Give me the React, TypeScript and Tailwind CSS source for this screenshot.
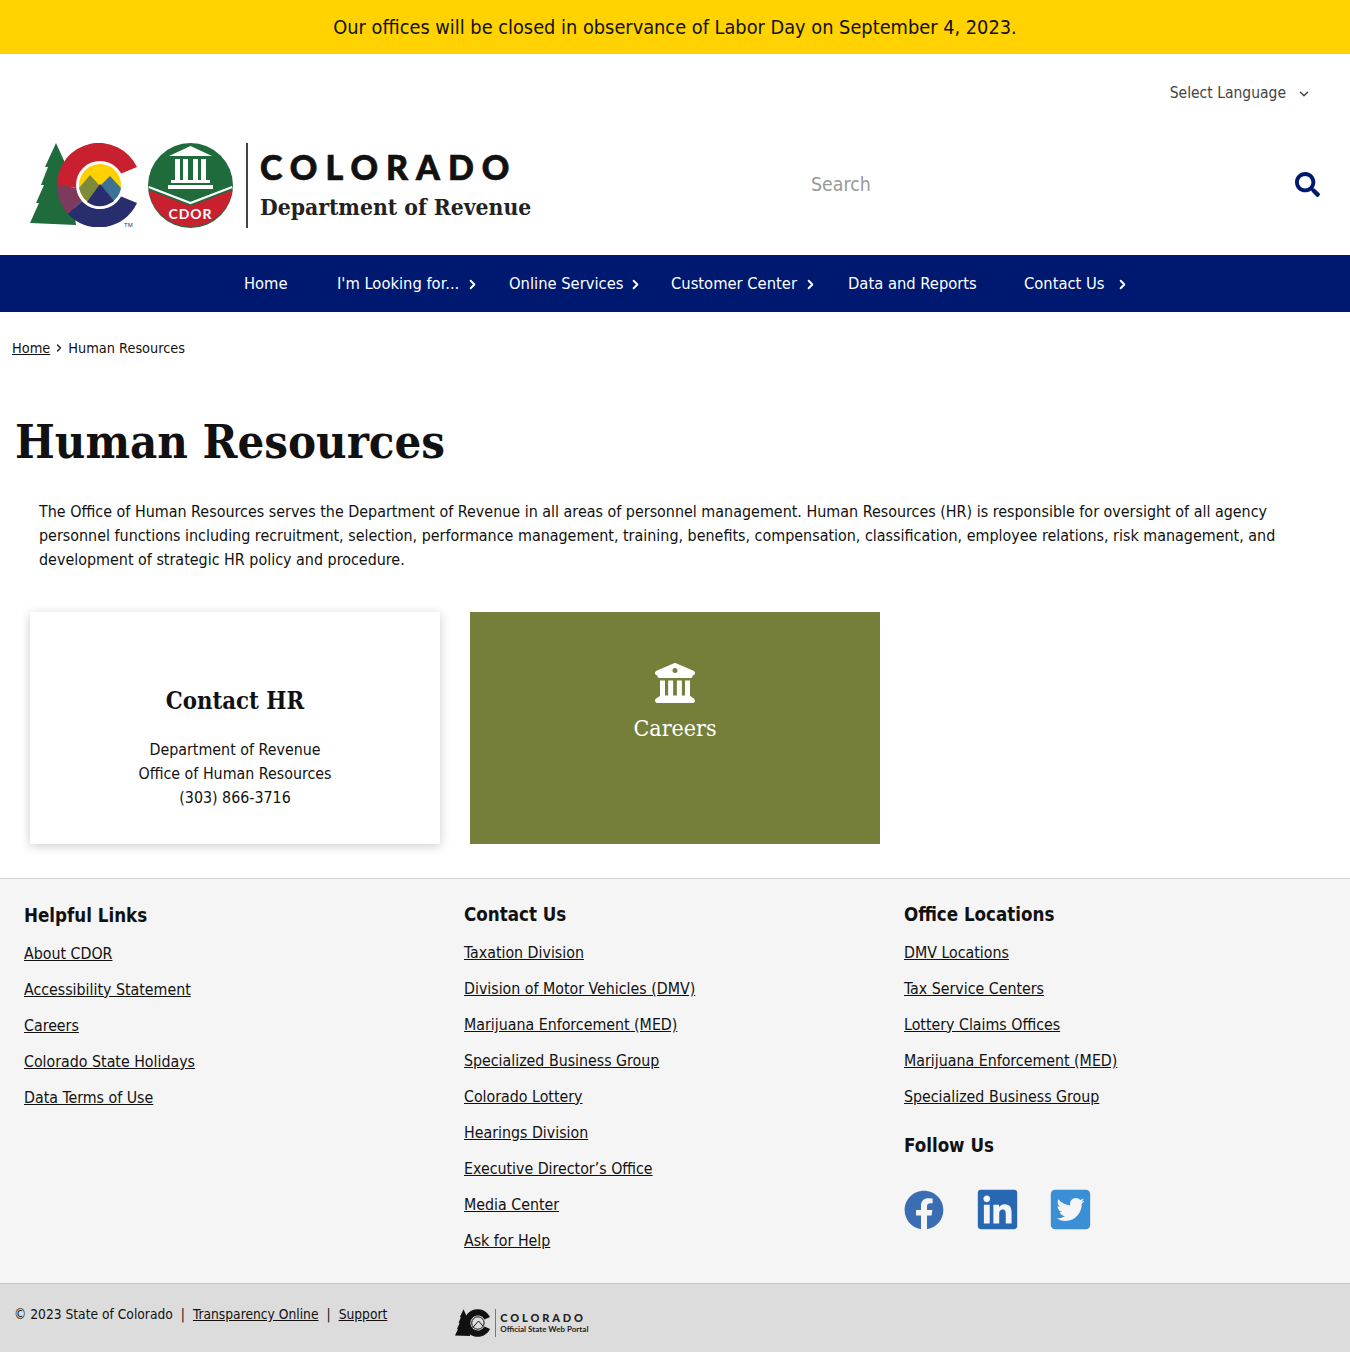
import { ChevronDown, ChevronRight } from "lucide-react";
import { FaFacebook, FaLinkedin, FaSearch, FaTwitterSquare } from "react-icons/fa";
import { FaBuildingColumns } from "react-icons/fa6";

const body = "font-['DejaVu_Sans_Condensed','DejaVu_Sans',sans-serif]";
const serif = "font-['DejaVu_Serif_Condensed','DejaVu_Serif',serif]";

const navItems = [
  { label: "Home", arrow: "", width: "w-[93px]" },
  { label: "I'm Looking for...", arrow: "mr-[5px]", width: "w-[172px]" },
  { label: "Online Services", arrow: "mr-[4px]", width: "w-[162px]" },
  { label: "Customer Center", arrow: "mr-[6px]", width: "w-[177px]" },
  { label: "Data and Reports", arrow: "", width: "w-[176px]" },
  { label: "Contact Us", arrow: "mr-0", width: "w-[130px]" },
];

const helpful = ["About CDOR", "Accessibility Statement", "Careers", "Colorado State Holidays", "Data Terms of Use"];
const contact = [
  "Taxation Division",
  "Division of Motor Vehicles (DMV)",
  "Marijuana Enforcement (MED)",
  "Specialized Business Group",
  "Colorado Lottery",
  "Hearings Division",
  "Executive Director’s Office",
  "Media Center",
  "Ask for Help",
];
const offices = ["DMV Locations", "Tax Service Centers", "Lottery Claims Offices", "Marijuana Enforcement (MED)", "Specialized Business Group"];

function ColoradoMark() {
  return (
    <svg viewBox="0 0 110 84" className="h-[84px] w-[110px] shrink-0">
      <path d="M26 0 L36 22 L33 22 L40 38 L46 82 L0 80 L9 60 L6 60 L14 42 L11 42 L18 24 L15 24 Z" fill="#1f6b3c" />
      <path d="M107 24 A42 42 0 0 0 27 42 L47 45 A23 23 0 0 1 90 31 Z" fill="#c8202f" />
      <path d="M27 42 A42 42 0 0 0 38 71 L52 58 A23 23 0 0 1 47 45 Z" fill="#7d3a5e" />
      <path d="M38 71 A42 42 0 0 0 107 60 L90 53 A23 23 0 0 1 52 58 Z" fill="#282d6e" />
      <circle cx="70" cy="42" r="24" fill="#fff" />
      <circle cx="70" cy="42" r="21" fill="#ffd100" />
      <path d="M49 45 L60 32 L70 43 L61 61 Q52 56 49 45 Z" fill="#7c8a3a" />
      <path d="M70 43 L80 33 L91 45 Q90 53 82 59 Z" fill="#3b7296" />
      <path d="M57 59 L70 41 L84 58 Q70 68 57 59 Z" fill="#282d6e" />
      <text x="94" y="84" fontSize="6" fill="#333" fontFamily="'Liberation Sans',sans-serif">TM</text>
    </svg>
  );
}

function CdorSeal() {
  return (
    <svg viewBox="0 0 85 85" className="h-[85px] w-[85px] shrink-0">
      <circle cx="42.5" cy="42.5" r="42.5" fill="#1f6b3c" />
      <path d="M0.4 47 L42.5 63 L84.6 47 A42.5 42.5 0 0 1 0.4 47 Z" fill="#c8202f" />
      <path d="M0.8 44 L42.5 60 L84.2 44" fill="none" stroke="#fff" strokeWidth="2.2" />
      <path d="M42.5 3 L64 13 L21 13 Z" fill="#fff" />
      <path d="M27 16h5v21h-5zM35 16h5v21h-5zM45 16h5v21h-5zM53 16h5v21h-5z" fill="#fff" />
      <rect x="23" y="37" width="39" height="3" fill="#fff" />
      <rect x="20" y="42" width="45" height="4" fill="#fff" />
      <text x="42.5" y="76" textAnchor="middle" fontSize="14" fontWeight="700" letterSpacing="1" fill="#fff" fontFamily="'Lato','Liberation Sans',sans-serif">CDOR</text>
    </svg>
  );
}

function FooterLogo() {
  return (
    <div className="flex items-center">
      <svg viewBox="0 0 110 84" className="h-[28px] w-[36px] shrink-0">
        <path d="M26 0 L36 22 L33 22 L40 38 L46 82 L0 80 L9 60 L6 60 L14 42 L11 42 L18 24 L15 24 Z" fill="#111" />
        <path d="M107 24 A42 42 0 1 0 107 60 L90 53 A23 23 0 1 1 90 31 Z" fill="#111" />
        <circle cx="70" cy="42" r="19" fill="none" stroke="#111" strokeWidth="3" />
        <path d="M54 56 L72 36 L86 52" fill="none" stroke="#111" strokeWidth="3" />
      </svg>
      <div className="ml-[4px] h-[28px] w-px bg-[#777]" />
      <div className="ml-[4px] flex flex-col font-['Lato','Liberation_Sans',sans-serif] text-[#222]">
        <span className="text-[11px] leading-[13px] font-black tracking-[0.26em]">COLORADO</span>
        <span className="text-[8px] leading-[11px] font-bold whitespace-nowrap">Official State Web Portal</span>
      </div>
    </div>
  );
}

function LinkColumn({ title, links, titleClass }: { title: string; links: string[]; titleClass: string }) {
  return (
    <>
      <h2 className={`text-[18.6px] leading-6 font-bold text-[#111] ${titleClass}`}>{title}</h2>
      <ul className="mt-[14px] flex flex-col gap-3">
        {links.map((link) => (
          <li key={link} className="leading-6">
            <a href="#" className="text-[#111] underline">{link}</a>
          </li>
        ))}
      </ul>
    </>
  );
}

export default function App() {
  return (
    <div className={`${body} min-h-[1352px] bg-white text-[#111]`}>
      <div className="flex h-[54px] items-center justify-center bg-[#ffd200] pt-[1px] text-[19.8px] text-[#111]">
        Our offices will be closed in observance of Labor Day on September 4, 2023.
      </div>

      <header>
        <div className="flex h-[76px] items-center justify-end pr-[39px] pt-[3px]">
          <span className="text-[15.5px] text-[#444]">Select Language</span>
          <ChevronDown size={14} strokeWidth={2.5} className="ml-[11px] text-[#444]" />
        </div>
        <div className="flex h-[125px] items-start pl-[30px] pr-[30px] pt-[13px]">
          <ColoradoMark />
          <div className="ml-[8px]"><CdorSeal /></div>
          <div className="ml-[13px] h-[85px] w-[2px] bg-[#444]" />
          <div className="ml-[12px] flex flex-col pt-[5px]">
            <span className="font-['Lato','Liberation_Sans',sans-serif] text-[34px] leading-[38px] font-black tracking-[0.235em] text-[#111] [-webkit-text-stroke:0.7px_#111]">COLORADO</span>
            <span className={`${serif} mt-[5px] text-[22.7px] leading-[32px] font-bold text-[#222]`}>Department of Revenue</span>
          </div>
          <div className="ml-auto flex h-[82px] w-[509px] items-center justify-between">
            <span className="pt-[2px] text-[19.4px] text-[#999]">Search</span>
            <FaSearch size={25} className="text-[#001970]" />
          </div>
        </div>
      </header>

      <nav className="flex h-[57px] items-center justify-center bg-[#001970] pt-[2px] text-white">
        <ul className="flex h-full items-center">
          {navItems.map((item) => (
            <li key={item.label} className={`flex items-center pl-[24px] ${item.width}`}>
              <span className="text-[16.4px] whitespace-nowrap">{item.label}</span>
              {item.arrow && <ChevronRight size={15} strokeWidth={3} className={`ml-auto shrink-0 ${item.arrow}`} />}
            </li>
          ))}
        </ul>
      </nav>

      <div className="flex items-center pl-[12px] pt-[24px] text-[14.4px] leading-6">
        <a href="#" className="underline">Home</a>
        <ChevronRight size={12} strokeWidth={2.5} className="mx-[3px]" />
        <span>Human Resources</span>
      </div>

      <h1 className={`${serif} mt-[53px] pl-[15px] text-[46.8px] leading-[58px] font-bold text-[#111]`}>Human Resources</h1>

      <p className="mt-[29px] pl-[39px] pr-[60px] text-[15.93px] leading-6">
        The Office of Human Resources serves the Department of Revenue in all areas of personnel management. Human Resources (HR) is responsible for oversight of all agency personnel functions including recruitment, selection, performance management, training, benefits, compensation, classification, employee relations, risk management, and development of strategic HR policy and procedure.
      </p>

      <section className="mt-[40px] flex gap-[30px] pl-[30px]">
        <div className="flex h-[232px] w-[410px] flex-col items-center bg-white pt-[73px] shadow-[0_2px_10px_rgba(0,0,0,0.2)]">
          <h2 className={`${serif} text-[23.7px] leading-8 font-bold`}>Contact HR</h2>
          <p className="mt-[21px] text-center text-[15.85px] leading-6">
            Department of Revenue<br />Office of Human Resources<br />(303) 866-3716
          </p>
        </div>
        <a href="#" className="flex h-[232px] w-[410px] flex-col items-center bg-[#757f3a] pt-[51px] text-white">
          <FaBuildingColumns size={40} />
          <span className={`${serif} mt-[9px] text-[23px] leading-8`}>Careers</span>
        </a>
      </section>

      <footer className="mt-[34px] border-t border-[#d4d4d4] bg-[#f5f5f5] text-[15.8px]">
        <div className="grid h-[404px] grid-cols-[440px_440px_1fr] pl-[24px] pt-[24px]">
          <div><LinkColumn title="Helpful Links" links={helpful} titleClass="mt-[1px]" /></div>
          <div><LinkColumn title="Contact Us" links={contact} titleClass="" /></div>
          <div>
            <LinkColumn title="Office Locations" links={offices} titleClass="" />
            <h2 className="mt-[25px] text-[18.6px] leading-6 font-bold text-[#111]">Follow Us</h2>
            <div className="mt-[32px] flex gap-[34px]">
              <div className="flex h-[39px] w-[39px] items-center justify-center text-[#3b6db5]"><FaFacebook size={40} className="shrink-0" /></div>
              <div className="flex h-[39px] w-[39px] items-center justify-center text-[#2867b2]"><FaLinkedin size={45} className="ml-[1px] shrink-0" /></div>
              <div className="flex h-[39px] w-[39px] items-center justify-center text-[#3b8fd4]"><FaTwitterSquare size={45} className="ml-[2px] shrink-0" /></div>
            </div>
          </div>
        </div>
        <div className="flex h-[69px] items-start border-t border-[#c8c8c8] bg-[#dcdcdc] pl-[14px] text-[13.7px] leading-5">
          <div className="mt-[20px] flex gap-[8px]">
            <span>© 2023 State of Colorado</span>
            <span>|</span>
            <a href="#" className="underline">Transparency Online</a>
            <span>|</span>
            <a href="#" className="underline">Support</a>
          </div>
          <div className="ml-[68px] mt-[25px]"><FooterLogo /></div>
        </div>
      </footer>
    </div>
  );
}
